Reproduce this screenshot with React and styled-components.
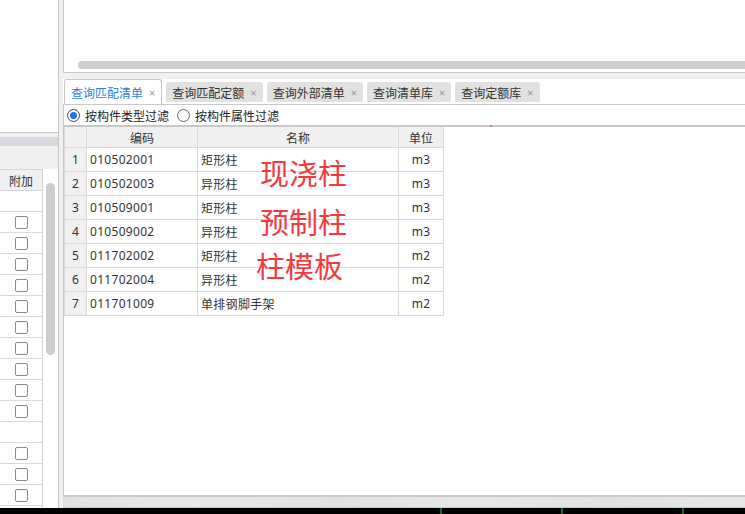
import React from 'react';
import styled, { createGlobalStyle } from 'styled-components';

const GlobalStyle = createGlobalStyle`
  html, body {
    margin: 0;
    padding: 0;
    background: #f0f0f0;
  }
  body {
    font-family: "Noto Sans", "Noto Sans CJK SC", sans-serif;
    font-size: 12px;
    color: #333;
  }
  * {
    box-sizing: border-box;
  }
`;

const tabs = ['查询匹配清单', '查询匹配定额', '查询外部清单', '查询清单库', '查询定额库'];

const rows = [
  { code: '010502001', name: '矩形柱', unit: 'm3' },
  { code: '010502003', name: '异形柱', unit: 'm3' },
  { code: '010509001', name: '矩形柱', unit: 'm3' },
  { code: '010509002', name: '异形柱', unit: 'm3' },
  { code: '011702002', name: '矩形柱', unit: 'm2' },
  { code: '011702004', name: '异形柱', unit: 'm2' },
  { code: '011701009', name: '单排钢脚手架', unit: 'm2' },
];

// true = row has a checkbox in the 附加 column
const attachRows = [
  false, true, true, true, true, true, true, true, true, true, true,
  false, true, true, true, false,
];

const notes = [
  { text: '现浇柱', left: 196, top: 31 },
  { text: '预制柱', left: 196, top: 80 },
  { text: '柱模板', left: 192, top: 124 },
];

const App = () => {
  return (
    <Screen>
      <GlobalStyle />
      <Main>
        <LeftPanel>
          <LeftTop />
          <LeftGap />
          <LeftTitle />
          <LeftToolbar />
          <LeftGrid>
            <AttachCol>
              <AttachHead>附加</AttachHead>
              {attachRows.map((hasBox, i) => (
                <AttachCell key={i}>{hasBox && <CheckBox />}</AttachCell>
              ))}
            </AttachCol>
            <VTrack>
              <VThumb />
            </VTrack>
          </LeftGrid>
        </LeftPanel>
        <Splitter />
        <RightPanel>
          <TopView>
            <HThumb />
          </TopView>
          <TabGap />
          <TabStrip>
            {tabs.map((t, i) => (
              <Tab key={t} active={i === 0}>
                <span>{t}</span>
                <Close>×</Close>
              </Tab>
            ))}
          </TabStrip>
          <Content>
            <FilterRow>
              <RadioLabel>
                <Radio checked />
                按构件类型过滤
              </RadioLabel>
              <RadioLabel>
                <Radio />
                按构件属性过滤
              </RadioLabel>
              <RedDot />
            </FilterRow>
            <GridWrap>
              <Grid>
                <HeadCell />
                <HeadCell>编码</HeadCell>
                <HeadCell>名称</HeadCell>
                <HeadCell>单位</HeadCell>
                {rows.map((r, i) => (
                  <React.Fragment key={r.code}>
                    <NumCell>{i + 1}</NumCell>
                    <Cell>{r.code}</Cell>
                    <Cell>{r.name}</Cell>
                    <Cell center>{r.unit}</Cell>
                  </React.Fragment>
                ))}
              </Grid>
              {notes.map((n) => (
                <Note key={n.text} style={{ left: n.left, top: n.top }}>
                  {n.text}
                </Note>
              ))}
            </GridWrap>
          </Content>
          <BottomBar />
        </RightPanel>
      </Main>
      <Taskbar>
        <Tick />
        <Tick />
        <Tick />
      </Taskbar>
    </Screen>
  );
};

export default App;

const Screen = styled.div`
  width: 745px;
  height: 514px;
  display: flex;
  flex-direction: column;
  overflow: hidden;
`;

const Main = styled.div`
  height: 508px;
  display: flex;
`;

const LeftPanel = styled.div`
  width: 59px;
  display: flex;
  flex-direction: column;
  border-right: 1px solid #c8c8c8;
  background: #fff;
  overflow: hidden;
`;

const LeftTop = styled.div`
  flex: 0 0 133px;
  background: #fff;
  border-bottom: 1px solid #c8c8c8;
`;

const LeftGap = styled.div`
  flex: 0 0 4px;
  background: #f0f0f0;
`;

const LeftTitle = styled.div`
  flex: 0 0 9px;
  background: #d7d8de;
`;

const LeftToolbar = styled.div`
  flex: 0 0 23px;
  background: #f0f0f0;
`;

const LeftGrid = styled.div`
  flex: 1;
  display: flex;
  background: #fff;
  min-height: 0;
`;

const AttachCol = styled.div`
  width: 43px;
  display: flex;
  flex-direction: column;
  border-right: 1px solid #d4d4d4;
`;

const AttachHead = styled.div`
  flex: 0 0 22px;
  display: flex;
  align-items: center;
  justify-content: center;
  background: #f0f0f0;
  border-top: 1px solid #d4d4d4;
  border-bottom: 1px solid #d4d4d4;
  font-family: "Noto Sans CJK SC", sans-serif;
  color: #333;
`;

const AttachCell = styled.div`
  flex: 0 0 21px;
  display: flex;
  align-items: center;
  justify-content: center;
  border-bottom: 1px solid #d9d9d9;
`;

const CheckBox = styled.span`
  width: 13px;
  height: 13px;
  border: 1px solid #8a8a8a;
  border-radius: 2px;
  background: #fff;
`;

const VTrack = styled.div`
  flex: 1;
  padding: 14px 0 0 3px;
`;

const VThumb = styled.div`
  width: 9px;
  height: 172px;
  border-radius: 5px;
  background: #cdcdcd;
`;

const Splitter = styled.div`
  width: 4px;
  background: #f0f0f0;
`;

const RightPanel = styled.div`
  flex: 1;
  display: flex;
  flex-direction: column;
  min-width: 0;
`;

const TopView = styled.div`
  flex: 0 0 73px;
  display: flex;
  flex-direction: column;
  justify-content: flex-end;
  padding: 0 0 3px 14px;
  background: #fff;
  border-left: 1px solid #c8c8c8;
  border-bottom: 1px solid #c8c8c8;
`;

const HThumb = styled.div`
  height: 8px;
  margin-right: -6px;
  border-radius: 4px;
  background: #cdcdcd;
`;

const TabGap = styled.div`
  flex: 0 0 6px;
  background: #f0f0f0;
`;

const TabStrip = styled.div`
  flex: 0 0 25px;
  display: flex;
  align-items: flex-end;
  gap: 4px;
  padding-left: 1px;
  background: #fff;
`;

const Tab = styled.div`
  display: flex;
  align-items: center;
  gap: 6px;
  padding: 0 6px;
  height: ${({ active }) => (active ? '25px' : '20px')};
  margin-bottom: ${({ active }) => (active ? '0' : '2px')};
  border: ${({ active }) => (active ? '1px solid #c8c8c8' : 'none')};
  border-bottom: none;
  border-radius: 3px 3px 0 0;
  background: ${({ active }) => (active ? '#fff' : '#e1e1e1')};
  color: ${({ active }) => (active ? '#2e7fe0' : '#333')};
  font-family: "Noto Sans CJK SC", sans-serif;
  font-size: 12px;
  white-space: nowrap;
`;

const Close = styled.span`
  font-family: "Noto Sans", sans-serif;
  font-size: 11px;
  color: #999;
`;

const Content = styled.div`
  flex: 1;
  display: flex;
  flex-direction: column;
  background: #fff;
  border-top: 1px solid #c8c8c8;
  border-left: 1px solid #c8c8c8;
  min-height: 0;
`;

const FilterRow = styled.div`
  position: relative;
  flex: 0 0 22px;
  display: flex;
  align-items: center;
  gap: 8px;
  padding-left: 3px;
  border-bottom: 2px solid #c8c8c8;
`;

const RadioLabel = styled.label`
  display: flex;
  align-items: center;
  gap: 5px;
  font-family: "Noto Sans CJK SC", sans-serif;
  color: #222;
`;

const Radio = styled.span`
  width: 13px;
  height: 13px;
  border-radius: 50%;
  border: 1px solid ${({ checked }) => (checked ? '#444' : '#666')};
  background: #fff;
  display: flex;
  align-items: center;
  justify-content: center;
  &::after {
    content: '';
    width: 7px;
    height: 7px;
    border-radius: 50%;
    background: ${({ checked }) => (checked ? '#1e74e0' : 'transparent')};
  }
`;

const RedDot = styled.span`
  position: absolute;
  left: 426px;
  bottom: -2px;
  width: 2px;
  height: 2px;
  background: #f07070;
`;

const GridWrap = styled.div`
  position: relative;
  flex: 1;
`;

const Grid = styled.div`
  display: grid;
  grid-template-columns: 22px 111px 201px 45px;
  grid-auto-rows: 24px;
  grid-template-rows: 21px;
  width: max-content;
  border-left: 1px solid #d9d9d9;
`;

const HeadCell = styled.div`
  display: flex;
  align-items: center;
  justify-content: center;
  background: #f0f0f0;
  border-right: 1px solid #d9d9d9;
  border-bottom: 1px solid #d9d9d9;
  font-family: "Noto Sans CJK SC", sans-serif;
  color: #333;
`;

const Cell = styled.div`
  display: flex;
  align-items: center;
  justify-content: ${({ center }) => (center ? 'center' : 'flex-start')};
  padding-left: ${({ center }) => (center ? '0' : '3px')};
  border-right: 1px solid #d9d9d9;
  border-bottom: 1px solid #d9d9d9;
  font-size: 12px;
  letter-spacing: 0.3px;
  color: #333;
  white-space: nowrap;
`;

const NumCell = styled(Cell)`
  justify-content: center;
  padding-left: 0;
  background: #f0f0f0;
`;

const Note = styled.div`
  position: absolute;
  font-family: "Noto Sans CJK SC", sans-serif;
  font-size: 29px;
  line-height: 29px;
  color: #f23a3c;
  white-space: nowrap;
  pointer-events: none;
`;

const BottomBar = styled.div`
  flex: 0 0 13px;
  border-top: 2px solid #c8c8c8;
  border-bottom: 1px solid #c8c8c8;
  background: linear-gradient(90deg, #e2e2e2, #e9e9e9 20%, #e2e2e2 40%, #e8e8e8 60%, #e2e2e2 80%, #e8e8e8);
`;

const Taskbar = styled.div`
  flex: 1;
  display: flex;
  gap: 119px;
  padding-left: 440px;
  background: #000;
`;

const Tick = styled.span`
  width: 2px;
  background: #1c6e1c;
`;
